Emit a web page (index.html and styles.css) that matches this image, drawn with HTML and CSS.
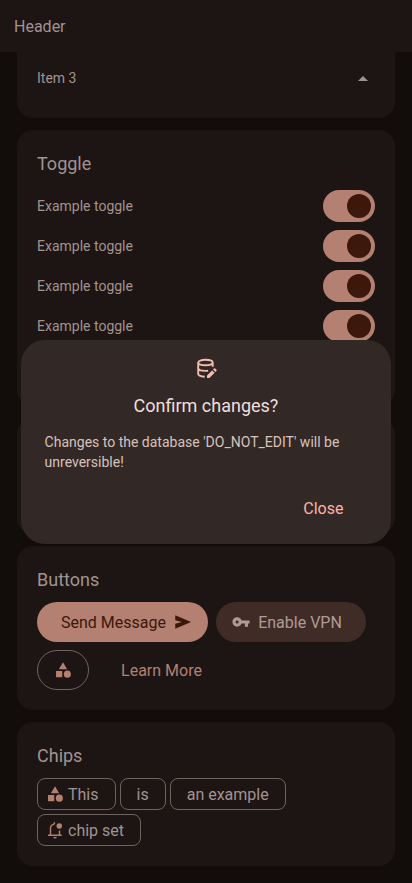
FILE: index.html
```html
<!DOCTYPE html>
<html lang="en">
<head>
<meta charset="utf-8">
<title>Components</title>
<link rel="stylesheet" href="styles.css">
</head>
<body>
<svg class="defs" aria-hidden="true">
  <symbol id="shapes" viewBox="0 0 24 24"><path d="M12 1.800L6.500 11h11zM2.700 13.300h8.300v8.300H2.700z"/><circle cx="17.800" cy="17.500" r="4.700"/></symbol>
</svg>
<header class="header">Header</header>
<main class="page">
  <section class="card card-list">
    <div class="row"><span>Item 3</span>
      <svg class="arrow" viewBox="0 0 24 24"><path d="M7 15l5-5 5 5z"/></svg>
    </div>
  </section>
  <section class="card card-toggle">
    <h2>Toggle</h2>
    <div class="row"><span>Example toggle</span><i class="switch"></i></div>
    <div class="row"><span>Example toggle</span><i class="switch"></i></div>
    <div class="row"><span>Example toggle</span><i class="switch"></i></div>
    <div class="row"><span>Example toggle</span><i class="switch"></i></div>
  </section>
  <section class="card card-hidden"></section>
  <section class="card card-buttons">
    <h2>Buttons</h2>
    <div class="buttons">
      <button class="btn filled"><span>Send Message</span><svg viewBox="1.5 1.2 21.6 21.6"><path d="M3 20v-6l8-2-8-2V4l19 8z"/></svg></button>
      <button class="btn tonal"><svg viewBox="0.4 0.4 23.2 23.2"><path d="M12.65 10C11.83 7.67 9.61 6 7 6c-3.31 0-6 2.69-6 6s2.69 6 6 6c2.61 0 4.83-1.67 5.65-4H17v4h4v-4h2v-4H12.65zM7 14c-1.1 0-2-.9-2-2s.9-2 2-2 2 .9 2 2-.9 2-2 2z"/></svg><span>Enable VPN</span></button>
      <button class="btn outlined"><svg><use href="#shapes"/></svg></button>
      <button class="btn text"><span>Learn More</span></button>
    </div>
  </section>
  <section class="card card-chips">
    <h2>Chips</h2>
    <div class="chips">
      <span class="chip with-icon"><svg><use href="#shapes"/></svg><span>This</span></span>
      <span class="chip"><span>is</span></span>
      <span class="chip"><span>an example</span></span>
      <span class="chip with-icon"><svg viewBox="0 0 24 24"><path class="line" d="M2.700 19h18.200M6 19V10c0-2.900 1.700-5 4.500-5.800l1.200-2.400M18 12.500V19"/><path d="M9.700 21.200h4.600a2.300 2 0 0 1-4.600 0z"/><circle cx="17.700" cy="6.700" r="3.700"/></svg><span>chip set</span></span>
    </div>
  </section>
</main>
<div class="dialog" role="dialog">
  <svg class="dialog-icon" viewBox="0 0 24 24"><path class="line" d="M4.200 6.500C4.200 4.900 7.300 3.800 11.400 3.800s7.300 1.100 7.300 2.700-3.200 2.700-7.300 2.700-7.200-1.100-7.200-2.700v11.300c0 1.600 2.700 2.700 6.500 2.900M4.200 12c0 1.700 3.200 2.900 7.200 2.900 1 0 1.900-.1 2.700-.2M18.700 6.500v4.300"/><path d="M13 22v-2.400l5.200-5.200 2.400 2.400-5.200 5.200zM19 13.600l1-1a.9.9 0 0 1 1.300 0l1.100 1.100a.9.9 0 0 1 0 1.300l-1 1z"/></svg>
  <h3>Confirm changes?</h3>
  <p>Changes to the database 'DO_NOT_EDIT' will be unreversible!</p>
  <div class="actions"><button class="close">Close</button></div>
</div>
</body>
</html>
```
FILE: styles.css
```css
* { box-sizing: border-box; }
body { margin: 0; height: 883px; overflow: hidden; background: #120d0a; color: #a19391; font: 14px/20px Roboto, sans-serif; }
svg { fill: currentColor; flex: none; }
.line { fill: none; stroke: currentColor; stroke-width: 1.9; }
button { border: 0; background: none; font: inherit; color: inherit; padding: 0; }
.defs { position: absolute; width: 0; height: 0; }
.header { height: 52px; padding: 15px 14px 13px; background: #1d1513; font-size: 16px; line-height: 24px; }
.page { display: flex; flex-direction: column; gap: 12px; padding: 0 17px; }
.card { background: #1d1513; border-radius: 16px; padding: 20px; }
.card-list { height: 66px; padding-top: 6px; border-radius: 0 0 16px 16px; }
.card-toggle { height: 276px; }
.card-hidden { height: 116px; }
.card-buttons { height: 164px; }
.card-chips { height: 144px; }
.row { display: flex; align-items: center; justify-content: space-between; height: 40px; }
.arrow { width: 24px; height: 24px; }
h2 { margin: 0 0 8px; font-size: 18px; line-height: 28px; font-weight: 400; }
.switch { width: 52px; height: 32px; border-radius: 16px; background: #b38071; display: flex; align-items: center; justify-content: flex-end; padding-right: 4px; }
.switch::after { content: ""; width: 24px; height: 24px; border-radius: 50%; background: #3b170c; }
.buttons { display: flex; flex-wrap: wrap; gap: 8px; }
.btn { display: flex; align-items: center; justify-content: center; gap: 8px; height: 40px; border-radius: 20px; font-size: 16px; line-height: 24px; }
.btn svg { width: 18px; height: 18px; }
.btn span, .chip > span { padding-top: 2px; }
.filled { width: 171px; padding: 0 16px 0 24px; background: #b38071; color: #3b170c; }
.tonal { width: 150px; padding: 0 24px 0 16px; background: #402c27; color: #b19a94; }
.outlined { width: 52px; border: 1px solid #6f625f; color: #b38071; }
.text { width: 129px; color: #b38071; }
.chips { display: flex; flex-wrap: wrap; gap: 4px; }
.chip { display: flex; align-items: center; gap: 4px; height: 32px; padding: 0 16px; border: 1px solid #6f625f; border-radius: 8px; font-size: 16px; }
.chip svg { width: 18px; height: 18px; color: #b38071; }
.with-icon { padding-left: 8px; }
.dialog { position: absolute; left: 5%; top: 340px; width: 90%; height: 204px; padding: 16px 24px; border-radius: 24px; background: #322826; color: #d8c2bc; display: flex; flex-direction: column; }
.dialog-icon { width: 24px; height: 24px; align-self: center; color: #f0bfb0; }
.dialog h3 { margin: 12px 0; text-align: center; font-size: 18px; line-height: 28px; font-weight: 400; color: #f0dfdb; }
.dialog p { margin: 0; }
.actions { display: flex; justify-content: flex-end; margin-top: 16px; }
.close { height: 40px; padding: 2px 24px 0; color: #ffb4a0; font-size: 16px; }
```
